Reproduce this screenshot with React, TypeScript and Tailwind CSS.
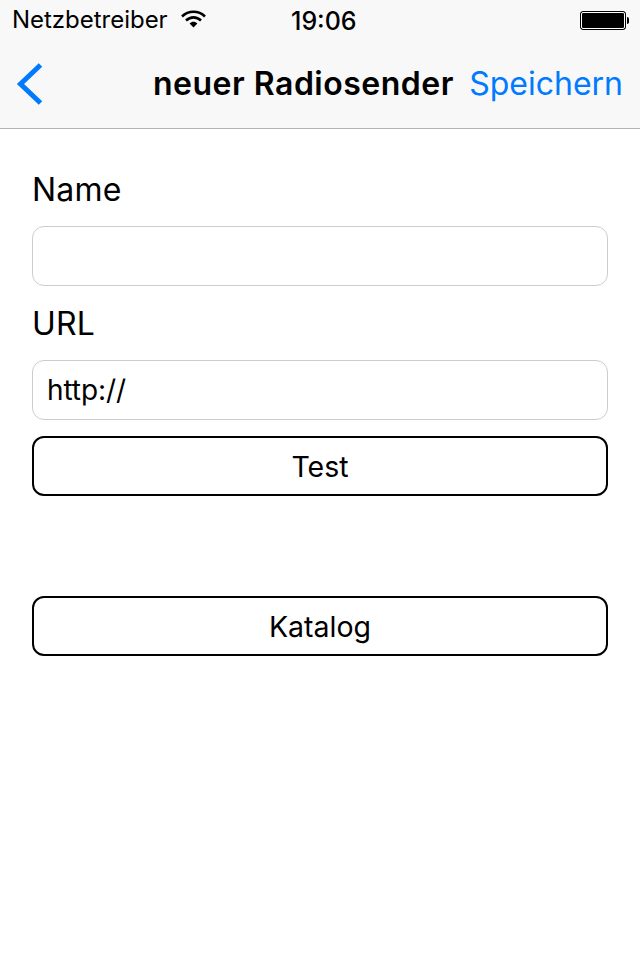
export default function App() {
  return (
    <div className="w-[640px] h-[960px] bg-white text-black overflow-hidden font-['Inter','Liberation_Sans',sans-serif]">
      <header className="h-[129px] bg-[#f8f8f8] border-b border-[#b2b2b2] flex flex-col">
        <div className="h-10 relative flex items-center pl-[12px]">
          <span className="text-[24px] tracking-[-0.02px] leading-none">Netzbetreiber</span>
          <svg className="ml-[13px] mb-[3px]" width="25" height="18" viewBox="0 0 25 18" fill="none">
            <path d="M1 6.5C7.5 0.2 17.5 0.2 24 6.5" stroke="#000" strokeWidth="2.6" />
            <path d="M5 10.5C9.5 6.3 15.5 6.3 20 10.5" stroke="#000" strokeWidth="2.6" />
            <path d="M8.6 13.4C11 11.2 14 11.2 16.4 13.4L12.5 17.6Z" fill="#000" />
          </svg>
          <span className="absolute left-[291px] top-[8px] text-[25px] font-medium leading-[26px]">19:06</span>
          <div className="absolute left-[580px] top-[11px] flex items-center">
            <div className="w-[46px] h-[19px] rounded-[3px] border border-black bg-black outline outline-1 -outline-offset-2 outline-white" />
            <div className="w-[2px] h-[7px] bg-black rounded-r-[2px] ml-[1px]" />
          </div>
        </div>
        <nav className="flex-1 relative flex items-center justify-between pl-4 pr-[17px] pb-[2px]">
          <svg width="28" height="44" viewBox="0 0 28 44" fill="none">
            <path d="M24.5 4L4.5 23L24.5 42" stroke="#007aff" strokeWidth="5" />
          </svg>
          <span className="absolute left-[153px] top-[24px] text-[32px] leading-[40px] font-semibold tracking-[0.5px]">neuer Radiosender</span>
          <span className="text-[32px] leading-[40px] text-[#007aff] relative top-[1px]">Speichern</span>
        </nav>
      </header>
      <main className="px-8 pt-[40px] flex flex-col">
        <label className="text-[32px] leading-[42px] h-[57px] tracking-[0.2px]">Name</label>
        <div className="h-[60px] rounded-[12px] border border-[#cdcdcd] bg-white" />
        <label className="text-[32px] leading-[44px] mt-[16px] h-[58px] tracking-[0.2px]">URL</label>
        <div className="h-[60px] rounded-[12px] border border-[#cdcdcd] bg-white flex items-center pl-[14px] text-[28px] tracking-[-0.1px]">http://</div>
        <button className="mt-4 h-[60px] rounded-[12px] border-2 border-black bg-white text-[28.5px] leading-[58px]">Test</button>
        <button className="mt-[100px] h-[60px] rounded-[12px] border-2 border-black bg-white text-[28.5px] leading-[58px]">Katalog</button>
      </main>
    </div>
  );
}
